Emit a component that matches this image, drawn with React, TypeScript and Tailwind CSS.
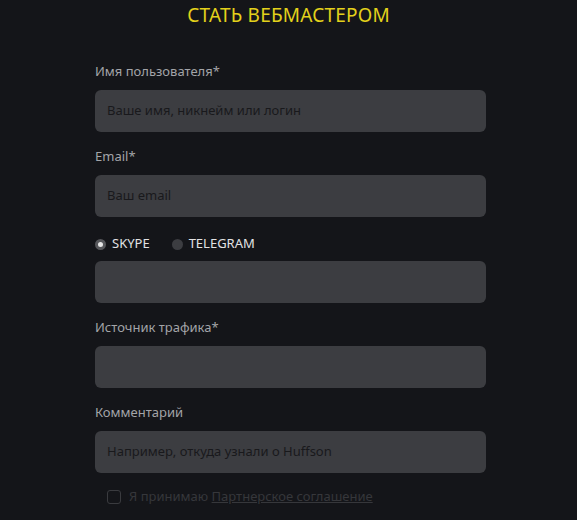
import React from "react";

const font = { fontFamily: "'Noto Sans', 'Open Sans', sans-serif" };

function Field({ label, placeholder }: { label?: string; placeholder?: string }) {
  return (
    <div className="flex flex-col">
      {label && <div className="text-[13px] leading-[16px] text-[#a3a4a8] mb-[11px]">{label}</div>}
      <div className="h-[42px] rounded-[6px] bg-[#3c3d41] flex items-center px-[12px]">
        {placeholder && <span className="text-[13px] text-[#19191c]">{placeholder}</span>}
      </div>
    </div>
  );
}

export default function App() {
  return (
    <div className="w-[577px] h-[520px] bg-[#141519] overflow-hidden" style={font}>
      <div className="pt-[4px] text-center text-[19px] leading-[22px] text-[#e3d11b] tracking-[0.2px]">
        СТАТЬ ВЕБМАСТЕРОМ
      </div>
      <div className="ml-[95px] w-[391px] mt-[37px] flex flex-col gap-[16px]">
        <Field label="Имя пользователя*" placeholder="Ваше имя, никнейм или логин" />
        <Field label="Email*" placeholder="Ваш email" />
        <div className="flex flex-col mt-[3px]">
          <div className="flex items-center gap-[22px] mb-[9px] h-[16px]">
            <div className="flex items-center gap-[6px]">
              <div className="w-[11px] h-[11px] rounded-full bg-[#e6e6e6] border-[3px] border-[#56575b]" />
              <span className="text-[13px] text-[#e2e2e4]">SKYPE</span>
            </div>
            <div className="flex items-center gap-[6px]">
              <div className="w-[11px] h-[11px] rounded-full bg-[#3c3d41]" />
              <span className="text-[13px] text-[#e2e2e4]">TELEGRAM</span>
            </div>
          </div>
          <div className="h-[42px] rounded-[6px] bg-[#3c3d41]" />
        </div>
        <Field label="Источник трафика*" />
        <Field label="Комментарий" placeholder="Например, откуда узнали о Huffson" />
        <div className="flex items-center gap-[8px] ml-[12px] -mt-[2px]">
          <div className="w-[14px] h-[14px] rounded-[3px] border border-[#3a3b3f]" />
          <span className="text-[13px] text-[#36373b]">
            Я принимаю <span className="underline">Партнерское соглашение</span>
          </span>
        </div>
      </div>
    </div>
  );
}
